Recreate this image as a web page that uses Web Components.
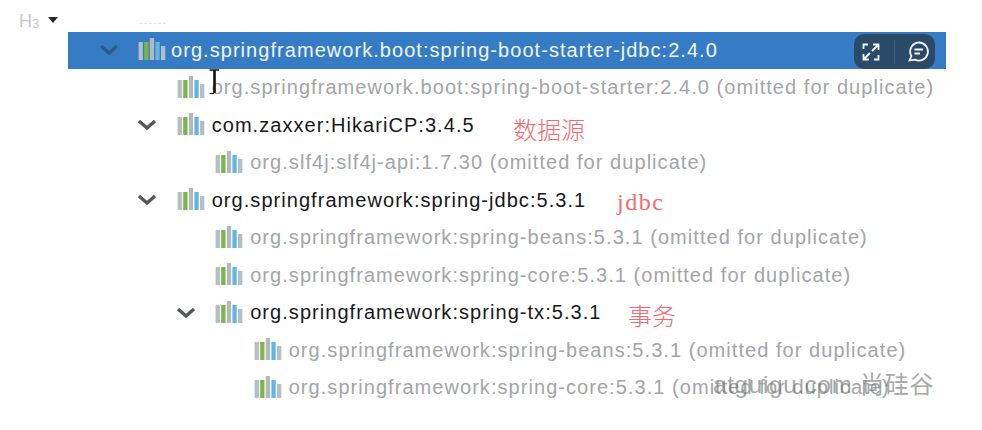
<!DOCTYPE html>
<html>
<head>
<meta charset="utf-8">
<style>
  html, body { margin: 0; padding: 0; background: #fff; }
  body { width: 982px; height: 430px; overflow: hidden; font-family: "Liberation Sans", Arial, sans-serif; }
</style>
</head>
<body>
<dep-page>
  <dep-row level="0" open selected>org.springframework.boot:spring-boot-starter-jdbc:2.4.0</dep-row>
  <dep-row level="1" omitted>org.springframework.boot:spring-boot-starter:2.4.0 (omitted for duplicate)</dep-row>
  <dep-row level="1" open>com.zaxxer:HikariCP:3.4.5</dep-row>
  <dep-row level="2" omitted>org.slf4j:slf4j-api:1.7.30 (omitted for duplicate)</dep-row>
  <dep-row level="1" open>org.springframework:spring-jdbc:5.3.1</dep-row>
  <dep-row level="2" omitted>org.springframework:spring-beans:5.3.1 (omitted for duplicate)</dep-row>
  <dep-row level="2" omitted>org.springframework:spring-core:5.3.1 (omitted for duplicate)</dep-row>
  <dep-row level="2" open>org.springframework:spring-tx:5.3.1</dep-row>
  <dep-row level="3" omitted>org.springframework:spring-beans:5.3.1 (omitted for duplicate)</dep-row>
  <dep-row level="3" omitted>org.springframework:spring-core:5.3.1 (omitted for duplicate)</dep-row>
</dep-page>
<script>
const BARS = /* html */`
<svg class="bars" width="28" height="24" viewBox="0 0 28 24">
  <rect x="0.6" y="5" width="4.3" height="18" fill="#b3bec6"/>
  <rect x="6.2" y="5" width="4.3" height="18" fill="#7ab648"/>
  <rect x="11.8" y="1" width="4.3" height="22" fill="#b2b8bd"/>
  <rect x="17.4" y="5" width="4.3" height="18" fill="#62b6e3"/>
  <rect x="23" y="9" width="4.3" height="14" fill="#b3bec6"/>
</svg>`;

class DepRow extends HTMLElement {
  constructor() {
    super();
    this.attachShadow({ mode: 'open' });
  }

  connectedCallback() {
    const level = Number(this.getAttribute('level') || 0);
    const open = this.hasAttribute('open');
    this.shadowRoot.innerHTML = /* html */`
    <style>
      :host {
        display: flex;
        align-items: center;
        height: 37.5px;
        box-sizing: border-box;
        padding-left: ${30.5 + level * 38.5}px;
        font-size: 20px;
        letter-spacing: 1.05px;
        color: #17181c;
        white-space: nowrap;
      }
      :host([omitted]) { color: #a3a5a8; }
      :host([selected]) { background: #367cc5; color: #f2f7fc; }
      .arrow { width: 39.5px; flex: none; display: flex; }
      .bars { flex: none; margin-right: ${level ? 7.2 : 5}px; margin-top: -2px; }
    </style>
    <span class="arrow">${open ? /* html */`
      <svg width="20" height="12" viewBox="0 0 20 12" fill="none" stroke="${this.hasAttribute('selected') ? '#285b8e' : '#55585b'}" stroke-width="3.4">
        <path d="M2 2 L10 9 L18 2"/>
      </svg>` : ''}
    </span>
    ${BARS}
    <span class="label"><slot></slot></span>`;
  }
}

class DepToolbar extends HTMLElement {
  constructor() {
    super();
    this.attachShadow({ mode: 'open' });
  }

  connectedCallback() {
    this.shadowRoot.innerHTML = /* html */`
    <style>
      :host {
        position: absolute;
        left: 854px;
        top: 34px;
        width: 81px;
        height: 35px;
        display: flex;
        align-items: center;
        background: #2b4a68;
        border-radius: 10px;
      }
      .cell { display: flex; align-items: center; }
      .grow { padding-left: 8px; width: 32px; }
      .talk { padding-left: 13px; }
      .sep { width: 1px; height: 24px; background: #3f5f7e; }
      svg { fill: none; stroke: #f2f5f8; stroke-width: 1.8; }
    </style>
    <span class="cell grow">
      <svg width="18" height="18" viewBox="0 0 18 18">
        <path d="M6 1.5 H1.5 V6 M16.5 12 V16.5 H12"/>
        <path d="M10 8 L16 2 M11 1.5 H16.5 V7 M8 10 L2 16 M1.5 11 V16.5 H7"/>
      </svg>
    </span>
    <span class="sep"></span>
    <span class="cell talk">
      <svg width="21" height="21" viewBox="0 0 21 21">
        <path d="M10.8 1.5 A9 9 0 1 1 7 18.6 L1.5 19.4 L3.4 15 A9 9 0 0 1 10.8 1.5 Z"/>
        <path d="M6.5 8.5 H15 M6.5 12.5 H12"/>
      </svg>
    </span>`;
  }
}

class RedNote extends HTMLElement {
  constructor() {
    super();
    this.attachShadow({ mode: 'open' });
  }

  connectedCallback() {
    this.shadowRoot.innerHTML = /* html */`
    <style>
      :host {
        position: absolute;
        left: ${this.getAttribute('x')}px;
        top: ${this.getAttribute('y')}px;
        color: #f7696f;
        font-family: "Liberation Serif", "Noto Sans CJK SC", serif;
        font-size: 24px;
        font-weight: 300;
        letter-spacing: ${this.getAttribute('track') || 0}px;
        line-height: 1;
        white-space: nowrap;
      }
    </style>
    <slot></slot>`;
  }
}

class DepPage extends HTMLElement {
  constructor() {
    super();
    this.attachShadow({ mode: 'open' });
  }

  connectedCallback() {
    this.shadowRoot.innerHTML = /* html */`
    <style>
      :host { display: block; position: relative; width: 982px; height: 430px; }
      .tree { position: absolute; left: 68px; top: 31.5px; width: 878px; }
      .heading {
        position: absolute; left: 19px; top: 11px;
        color: #c8c8c8; font-size: 18px;
      }
      .heading small { font-size: 13px; position: relative; top: 1px; }
      .caret {
        position: absolute; left: 48px; top: 17px; width: 0; height: 0;
        border: 5.5px solid transparent; border-top: 6px solid #2a2a2a; border-bottom: 0;
      }
      .dash { position: absolute; left: 139px; top: 23px; width: 27px; border-top: 1px dashed #dfe8e2; }
      .cursor { position: absolute; left: 208px; top: 68px; }
      .mark {
        position: absolute; left: 713px; top: 365px;
        color: rgba(110, 110, 110, .62);
        font-size: 24px; letter-spacing: .8px; white-space: nowrap;
        font-family: "Liberation Sans", "Noto Sans CJK SC", sans-serif;
      }
    </style>
    <span class="heading">H<small>3</small></span>
    <span class="caret"></span>
    <span class="dash"></span>
    <div class="tree"><slot></slot></div>
    <dep-toolbar></dep-toolbar>
    <svg class="cursor" width="13" height="27" viewBox="0 0 13 27" fill="none" stroke="#111">
      <path d="M1.5 2 H11" stroke-width="1.5"/>
      <path d="M6.5 2 V25" stroke-width="2.6"/>
      <path d="M1.5 25.5 H6" stroke-width="1.2"/>
    </svg>
    <red-note x="513" y="119">数据源</red-note>
    <red-note x="617" y="190" track="1.5">jdbc</red-note>
    <red-note x="628" y="305">事务</red-note>
    <span class="mark">atguigu.com 尚硅谷</span>`;
  }
}

customElements.define('dep-row', DepRow);
customElements.define('dep-toolbar', DepToolbar);
customElements.define('red-note', RedNote);
customElements.define('dep-page', DepPage);
</script>
</body>
</html>
